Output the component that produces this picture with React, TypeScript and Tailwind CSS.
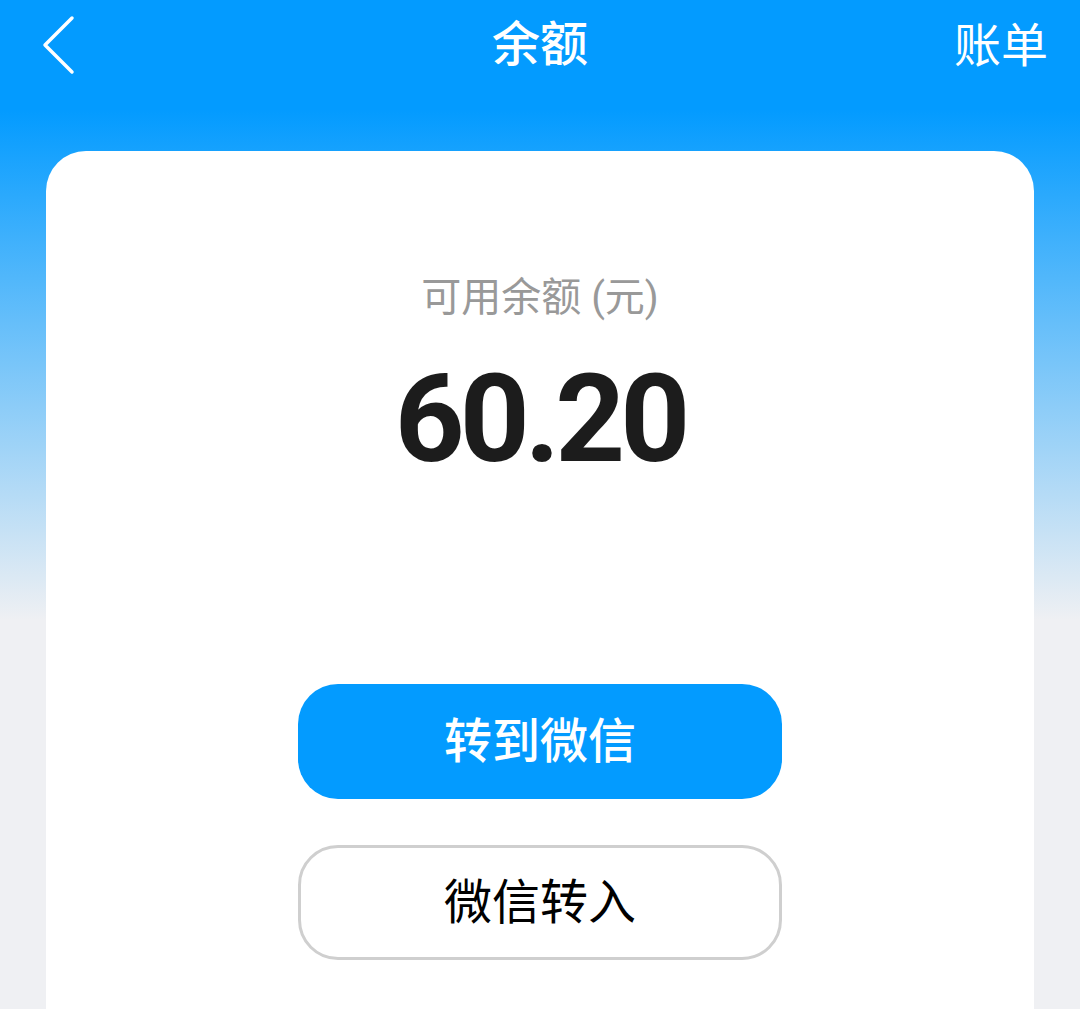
const cjk = "font-['Roboto','Noto_Sans_CJK_SC',sans-serif]"

export default function App() {
  return (
    <div
      className={`min-h-screen w-full bg-[linear-gradient(to_bottom,#039bff_110px,#eff0f3_620px)] ${cjk}`}
    >
      {/* Header */}
      <div className="grid h-[90px] grid-cols-3 items-center px-[32px] text-white">
        <div className="flex items-center">
          <svg width="40" height="60" viewBox="0 0 40 60" className="ml-[8px]" fill="none">
            <path
              d="M32 7 L5 34 L32 61"
              stroke="white"
              strokeWidth="3.5"
              strokeLinecap="round"
              strokeLinejoin="round"
              transform="translate(0,-4)"
            />
          </svg>
        </div>
        <div className="text-center text-[48px] font-medium leading-none">余额</div>
        <div className="text-right text-[47px] leading-none">账单</div>
      </div>

      {/* Card */}
      <div className="mx-[46px] mt-[61px] flex min-h-[900px] flex-col items-center rounded-t-[40px] bg-white pt-[120px]">
        <p className="text-[40px] leading-[54px] text-[#999999]">可用余额 (元)</p>
        <p className="mt-[34px] font-['Roboto',sans-serif] text-[122px] font-bold leading-[122px] tracking-[-5px] text-[#1c1c1c]">
          60.20
        </p>

        <button className="mt-[203px] flex h-[115px] w-[484px] items-center justify-center rounded-[40px] bg-[#039bff] text-[48px] font-medium text-white">
          转到微信
        </button>
        <button className="mt-[46px] flex h-[115px] w-[484px] items-center justify-center rounded-[40px] border-[3px] border-[#cfcfcf] bg-white text-[48px] font-normal text-black">
          微信转入
        </button>
      </div>
    </div>
  )
}
